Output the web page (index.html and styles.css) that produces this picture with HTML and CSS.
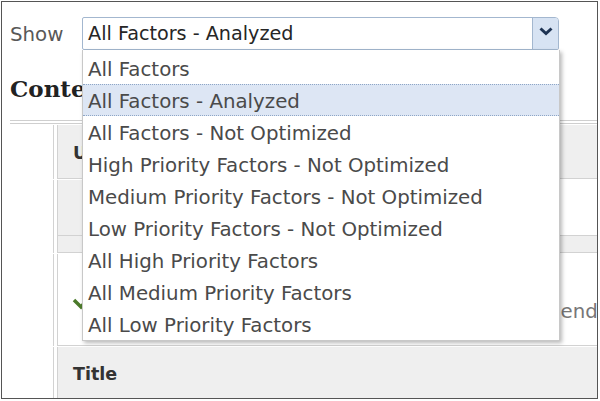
FILE: index.html
```html
<!DOCTYPE html>
<html>
<head>
<meta charset="utf-8">
<link rel="stylesheet" href="styles.css">
</head>
<body>
<div class="frame">
  <div class="toolbar">
    <span class="label">Show</span>
    <div class="select">
      <span class="select-value">All Factors - Analyzed</span>
      <span class="select-btn">
        <svg width="14" height="9" viewBox="0 0 14 9"><polyline points="1.5,1.5 7,6.5 12.5,1.5" fill="none" stroke="#1d3353" stroke-width="3"/></svg>
      </span>
    </div>
  </div>

  <h2 class="heading">Content</h2>
  <div class="rule"></div>

  <div class="table">
    <div class="row">
      <div class="cell head">URL</div>
    </div>
    <div class="row">
      <div class="cell split">
        <div class="split-top">
          <div class="label-cell"></div>
          <div class="value-cell"></div>
        </div>
        <div class="band"></div>
      </div>
    </div>
    <div class="row">
      <div class="cell body">
        <svg class="check" width="24" height="24" viewBox="0 0 24 24"><path d="M2 12 L9 19 L22 4" fill="none" stroke="#4b7a2a" stroke-width="3.5"/></svg>
        <span class="rec">Recommended</span>
      </div>
    </div>
    <div class="row">
      <div class="cell head title">Title</div>
    </div>
  </div>

  <ul class="list">
    <li class="item">All Factors</li>
    <li class="item active">All Factors - Analyzed</li>
    <li class="item">All Factors - Not Optimized</li>
    <li class="item">High Priority Factors - Not Optimized</li>
    <li class="item">Medium Priority Factors - Not Optimized</li>
    <li class="item">Low Priority Factors - Not Optimized</li>
    <li class="item">All High Priority Factors</li>
    <li class="item">All Medium Priority Factors</li>
    <li class="item">All Low Priority Factors</li>
  </ul>
</div>
</body>
</html>
```

FILE: styles.css
```css
* { box-sizing: border-box; }
html, body { margin: 0; padding: 0; background: #fff; }
body { font-family: "DejaVu Sans", Verdana, sans-serif; }

.frame {
  position: relative;
  margin: 1px 0 0 1px;
  width: 597px;
  height: 398px;
  border: 1px solid #555;
  overflow: hidden;
  background: #fff;
}

.toolbar {
  display: flex;
  align-items: center;
  margin-top: 15px;
  padding-left: 8px;
}
.label {
  width: 72px;
  font-size: 19.8px;
  color: #585858;
  padding-top: 2px;
}
.select {
  display: flex;
  width: 477px;
  height: 33px;
  border: 1px solid #a3b7cf;
  border-radius: 2px 4px 2px 2px;
}
.select-value {
  flex: 1;
  padding-left: 5px;
  font-size: 19.2px;
  line-height: 31px;
  color: #262626;
}
.select-btn {
  width: 26px;
  border-left: 1px solid #a3b7cf;
  background: #d7e3f3;
  border-radius: 0 3px 0 0;
  display: flex;
  align-items: center;
  justify-content: center;
  padding-bottom: 4px;
}

.heading {
  margin: 25px 0 0 8px;
  font-family: "DejaVu Serif", Georgia, serif;
  font-weight: bold;
  font-size: 23px;
  line-height: 28px;
  color: #222;
}
.rule {
  margin: 17px 0 0 8px;
  height: 4px;
  border-top: 1px solid #cfcfcf;
  border-bottom: 1px solid #cfcfcf;
}

.table {
  margin: 1px 0 0 51px;
}
.row {
  border-left: 1px solid #d2d2d2;
  padding-left: 3px;
  margin-bottom: 1px;
}
.cell {
  border-left: 1px solid #d2d2d2;
  border-bottom: 1px solid #d2d2d2;
}
.head {
  height: 54px;
  background: #efefef;
  padding: 16px 0 0 15px;
  font-size: 17.5px;
  line-height: 24px;
  font-weight: bold;
  color: #333;
}
.split-top {
  display: flex;
  height: 55px;
}
.label-cell { width: 150px; background: #efefef; }
.value-cell { flex: 1; background: #fff; }
.band {
  height: 17px;
  border-top: 1px solid #d2d2d2;
  background: #efefef;
}
.body {
  height: 92px;
  display: flex;
  align-items: flex-start;
  padding: 42px 0 0 14px;
  background: #fff;
}
.check { margin-top: -8px; flex: none; }
.rec {
  margin-left: 378px;
  font-size: 19.8px;
  line-height: 32px;
  color: #777;
  white-space: nowrap;
}
.title {
  height: 60px;
  padding-top: 15px;
  border-bottom: none;
}

.list {
  position: absolute;
  left: 80px;
  top: 48px;
  width: 478px;
  margin: 0;
  padding: 2px 0 0 0;
  list-style: none;
  background: #fff;
  border: 1px solid #c8c8c8;
  border-top: none;
  box-shadow: 2px 2px 4px rgba(0, 0, 0, 0.28);
}
.item {
  height: 32px;
  padding: 3px 0 0 5px;
  font-size: 19.8px;
  line-height: 29px;
  color: #4a4a4a;
  white-space: nowrap;
}
.active {
  background: #dde6f4;
  border-top: 1px dotted #8ea6c6;
  border-bottom: 1px dotted #8ea6c6;
  padding-top: 2px;
}
```
